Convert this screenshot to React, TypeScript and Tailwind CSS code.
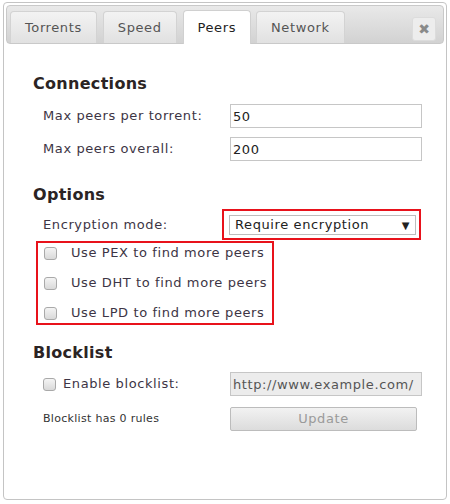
import { useState } from 'react';

const tabs = ['Torrents', 'Speed', 'Peers', 'Network'];

function Checkbox({ checked, onChange }: { checked: boolean; onChange: () => void }) {
  return (
    <span
      onClick={onChange}
      className="inline-block w-[13px] h-[13px] rounded-[3px] border border-[#a9a9a9] bg-gradient-to-b from-[#f4f4f4] to-[#d9d9d9] shrink-0"
    >
      {checked && <span className="block text-[10px] leading-[11px] text-center text-[#333]">✓</span>}
    </span>
  );
}

function CheckRow({ label }: { label: string }) {
  const [on, setOn] = useState(false);
  return (
    <div className="flex items-center h-[20px]">
      <Checkbox checked={on} onChange={() => setOn(!on)} />
      <span className="ml-[14px]">{label}</span>
    </div>
  );
}

export default function App() {
  const [active, setActive] = useState('Peers');
  const [blocklist, setBlocklist] = useState(false);

  return (
    <div className="w-[450px] h-[504px] bg-white pt-[2px] px-[3px] pb-[4px] font-['DejaVu_Sans',Verdana,sans-serif] text-[13px] tracking-[0.6px] text-[#3d3545]">
      <div className="h-full rounded-[4px] border border-[#c4c4c4] p-[2px] flex flex-col">
        {/* tab bar */}
        <div className="h-[39px] rounded-[4px] border border-[#c9c9c9] bg-gradient-to-b from-[#e9e9e9] to-[#d2d2d2] flex items-end pl-[3px] pr-[7px]">
          {tabs.map((t) => (
            <button
              key={t}
              onClick={() => setActive(t)}
              className={
                t === active
                  ? 'h-[34px] px-[14px] mr-[5px] rounded-t-[4px] border border-b-0 border-[#d0d0d0] bg-white text-[#222] -mb-px'
                  : 'h-[32px] px-[14px] mr-[6px] rounded-t-[4px] border border-b-0 border-[#d3d3d3] bg-gradient-to-b from-[#f3f3f3] to-[#e1e1e1] text-[#555]'
              }
            >
              {t}
            </button>
          ))}
          <div className="ml-auto mb-[2px] w-[24px] h-[24px] rounded-[3px] border border-[#dcdcdc] bg-[#ededed] flex items-center justify-center text-[#8a8a8a] text-[14px] font-bold tracking-normal">
            ✖
          </div>
        </div>

        <div className="pl-[27px] pr-[22px]">
          <h3 className="mt-[28px] text-[16px] font-bold tracking-[0.3px] text-[#2b2424]">Connections</h3>
          <div className="mt-[8px] pl-[10px] flex flex-col gap-[9px]">
            <div className="flex items-center">
              <span className="w-[187px]">Max peers per torrent:</span>
              <input defaultValue="50" className="w-[192px] h-[24px] border border-[#c6c6c6] px-[2px] text-[13px] text-[#222] outline-none" />
            </div>
            <div className="flex items-center">
              <span className="w-[187px]">Max peers overall:</span>
              <input defaultValue="200" className="w-[192px] h-[24px] border border-[#c6c6c6] px-[2px] text-[13px] text-[#222] outline-none" />
            </div>
          </div>

          <h3 className="mt-[22px] text-[16px] font-bold tracking-[0.3px] text-[#2b2424]">Options</h3>
          <div className="mt-[2px] pl-[3px]">
            <div className="flex items-center">
              <span className="w-[186px] pl-[7px]">Encryption mode:</span>
              <div className="border-2 border-[#e8121b] pt-[4px] pb-[3px] pl-[5px] pr-[3px]">
                <div className="w-[187px] h-[20px] border border-[#bdbdbd] bg-white px-[5px] flex items-center justify-between text-[#222]">
                  <span>Require encryption</span>
                  <span className="text-[10px]">▼</span>
                </div>
              </div>
            </div>
            <div className="mt-[1px] w-[238px] border-2 border-[#e8121b] pl-[6px] flex flex-col gap-[10px]">
              <CheckRow label="Use PEX to find more peers" />
              <CheckRow label="Use DHT to find more peers" />
              <CheckRow label="Use LPD to find more peers" />
            </div>
          </div>

          <h3 className="mt-[16px] text-[16px] font-bold tracking-[0.3px] text-[#2b2424]">Blocklist</h3>
          <div className="mt-[7px] pl-[10px]">
            <div className="flex items-center">
              <span className="w-[187px] flex items-center">
                <Checkbox checked={blocklist} onChange={() => setBlocklist(!blocklist)} />
                <span className="ml-[7px]">Enable blocklist:</span>
              </span>
              <input
                defaultValue="http://www.example.com/"
                disabled
                className="w-[192px] h-[24px] border border-[#c6c6c6] bg-[#ececec] px-[2px] text-[13px] tracking-[0.6px] text-[#555]"
              />
            </div>
            <div className="mt-[11px] flex items-center">
              <span className="w-[187px] text-[11px] tracking-[0.3px] text-[#333]">Blocklist has 0 rules</span>
              <button className="w-[187px] h-[24px] rounded-[2px] border border-[#bcbcbc] bg-gradient-to-b from-[#f2f2f2] to-[#dcdcdc] text-[#9a9a9a]">
                Update
              </button>
            </div>
          </div>
        </div>
      </div>
    </div>
  );
}
